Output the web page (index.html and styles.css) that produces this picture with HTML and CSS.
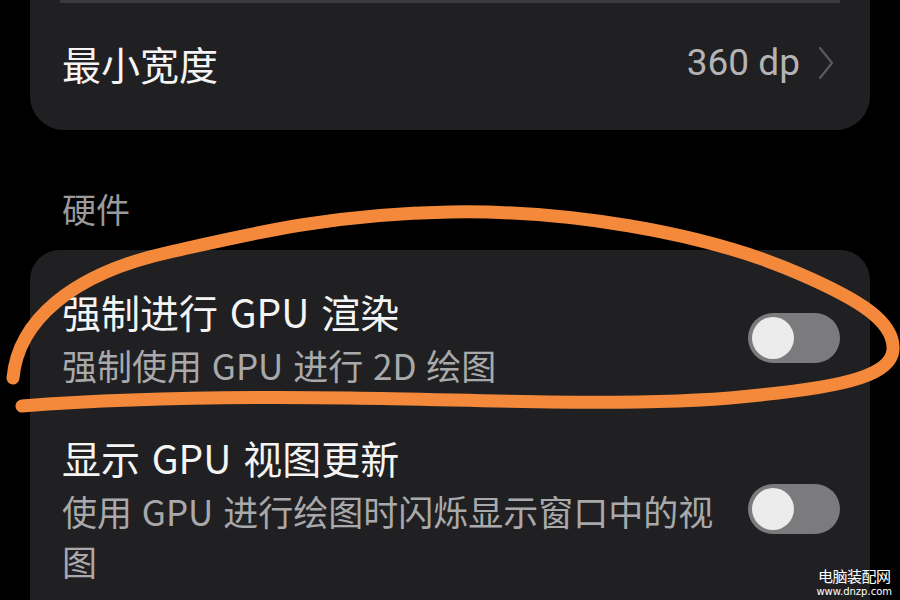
FILE: index.html
```html
<!DOCTYPE html>
<html lang="zh-CN">
<head>
  <meta charset="UTF-8" />
  <meta name="viewport" content="width=device-width, initial-scale=1.0"/>
  <title>开发者选项</title>
  <link rel="stylesheet" href="styles.css">
</head>
<body>

<div class="screen">
  <div class="card card-top">
    <div class="divider"></div>
    <div class="row row-link">
      <span class="row-title">最小宽度</span>
      <span class="row-value">360 dp</span>
      <svg class="chevron" width="16" height="34" viewBox="0 0 16 34">
        <polyline points="2,2 14,17 2,32" fill="none" stroke="#5a5a5c" stroke-width="2.2" stroke-linecap="round" stroke-linejoin="round"/>
      </svg>
    </div>
  </div>

  <div class="section-label">硬件</div>

  <div class="card card-list">
    <div class="row">
      <div class="row-text">
        <div class="row-title">强制进行 GPU 渲染</div>
        <div class="row-sub">强制使用 GPU 进行 2D 绘图</div>
      </div>
      <div class="switch"><span class="knob"></span></div>
    </div>
    <div class="row">
      <div class="row-text">
        <div class="row-title">显示 GPU 视图更新</div>
        <div class="row-sub">使用 GPU 进行绘图时闪烁显示窗口中的视图</div>
      </div>
      <div class="switch"><span class="knob"></span></div>
    </div>
  </div>

  <!-- hand drawn highlight over the screenshot -->
  <svg class="scribble" width="900" height="600" viewBox="0 0 900 600">
    <path d="M13 378 C18 322, 70 274, 170 252 C250 234, 330 214, 450 212 C560 210, 700 230, 800 274 C860 300, 895 322, 893 350 C891 374, 850 386, 760 395 C650 408, 500 400, 350 398 C200 396, 100 400, 22 406"
          fill="none" stroke="#f4893b" stroke-width="13" stroke-linecap="round" stroke-linejoin="round"/>
  </svg>

  <div class="watermark">
    <div class="wm-name">电脑装配网</div>
    <div class="wm-url">www.dnzp.com</div>
  </div>
</div>

</body>
</html>
```
FILE: styles.css
```css
* {
  box-sizing: border-box;
}

body {
  margin: 0;
  background: #000;
  font-family: "Noto Sans CJK SC", "Noto Sans", sans-serif;
  color: #f0f0f0;
}

.screen {
  position: relative;
  width: 900px;
  height: 600px;
  overflow: hidden;
  padding: 0 30px;
}

.card {
  background: #202022;
}

.card-top {
  border-radius: 0 0 34px 34px;
}

.divider {
  height: 3px;
  margin: 0 30px;
  background: #3a3a3c;
}

.row {
  display: flex;
  align-items: center;
  padding: 21px 30px 21px 32px;
}

.row-link {
  padding-top: 35px;
  padding-bottom: 42px;
}

.row-title {
  font-size: 39px;
  line-height: 50px;
  font-weight: 400;
  word-spacing: 3px;
  color: #f4f4f4;
}

.row-link .row-title {
  flex: 1;
}

.row-value {
  font-family: Roboto, sans-serif;
  font-size: 37px;
  line-height: 50px;
  color: #b4b4b6;
  margin-right: 18px;
}

.chevron {
  display: block;
  margin-right: 6px;
}

.section-label {
  font-size: 34px;
  line-height: 50px;
  color: #9a9a9c;
  padding-left: 32px;
  margin: 54px 0 16px;
}

.card-list {
  border-radius: 30px 30px 0 0;
  padding-top: 15px;
  height: 400px;
}

.row-text {
  flex: 1;
  margin-right: 26px;
}

.row-sub {
  font-size: 35px;
  line-height: 50px;
  word-spacing: 2px;
  margin-top: 4px;
  color: #a9a9ab;
}

.switch {
  width: 92px;
  height: 50px;
  border-radius: 25px;
  background: #7b7b7d;
  padding: 4px;
  flex-shrink: 0;
}

.knob {
  display: block;
  width: 42px;
  height: 42px;
  border-radius: 50%;
  background: #ececec;
}

.scribble {
  position: absolute;
  left: 0;
  top: 0;
  pointer-events: none;
}

.watermark {
  position: absolute;
  right: 8px;
  bottom: 2px;
  text-align: center;
  color: #fff;
}

.wm-name {
  font-size: 15px;
  line-height: 18px;
  letter-spacing: -0.5px;
}

.wm-url {
  font-family: "DejaVu Sans", sans-serif;
  font-size: 10px;
  line-height: 13px;
}
```
